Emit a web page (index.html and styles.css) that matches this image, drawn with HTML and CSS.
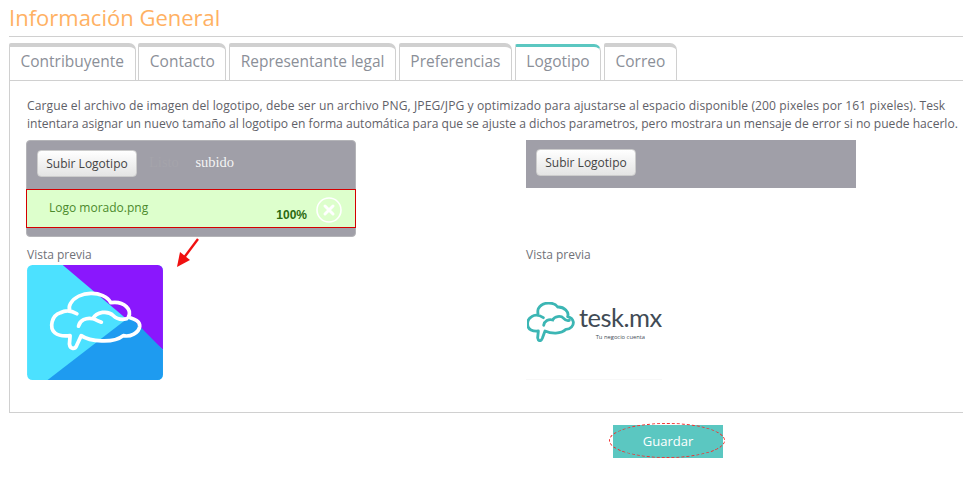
FILE: index.html
```html
<!DOCTYPE html>
<html lang="es">
<head>
    <meta charset="UTF-8">
    <meta name="viewport" content="width=device-width, initial-scale=1.0">
    <title>Información General</title>
    <link rel="stylesheet" href="styles.css">
</head>
<body>
    <div class="page">
        <h1>Información General</h1>

        <ul class="tabs">
            <li class="tab">Contribuyente</li>
            <li class="tab">Contacto</li>
            <li class="tab">Representante legal</li>
            <li class="tab">Preferencias</li>
            <li class="tab active">Logotipo</li>
            <li class="tab">Correo</li>
        </ul>

        <div class="panel">
            <p class="intro"><span class="intro-first">Cargue el archivo de imagen del logotipo, debe ser un archivo PNG, JPEG/JPG y optimizado para ajustarse al espacio disponible (200 pixeles por 161 pixeles). Tesk</span><br>intentara asignar un nuevo tamaño al logotipo en forma automática para que se ajuste a dichos parametros, pero mostrara un mensaje de error si no puede hacerlo.</p>

            <div class="columns">
                <div class="column">
                    <div class="uploader">
                        <div class="uploader-bar">
                            <button class="upload-btn" type="button">Subir Logotipo</button>
                            <span class="upload-status"><span class="status-ghost">Listo</span> subido</span>
                        </div>
                        <div class="upload-row">
                            <span class="file-name">Logo morado.png</span>
                            <span class="file-percent">100%</span>
                            <span class="file-remove">
                                <svg viewBox="0 0 26 26" width="26" height="26">
                                    <circle cx="13" cy="13" r="12" fill="none" stroke="#fff" stroke-width="1.6"/>
                                    <path d="M9 9l8 8M17 9l-8 8" fill="none" stroke="#fff" stroke-width="3" stroke-linecap="round"/>
                                </svg>
                            </span>
                        </div>
                    </div>
                    <div class="preview-label">Vista previa</div>
                    <svg class="preview" viewBox="39 30 404 342" width="136" height="115">
                        <rect x="39" y="30" width="404" height="342" rx="16" fill="#4ce1ff"/>
                        <path d="M145 30H427a16 16 0 0 1 16 16V282Z" fill="#8a17fd"/>
                        <path d="M100 372L345 183L443 282V356a16 16 0 0 1-16 16Z" fill="#1e9bf0"/>
                        <path d="M187 175C170 165 152 165 138 172C112 180 104 216 122 232C132 240 150 242 167 240L165 265C167 281 182 282 187 268L200 240C225 257 295 265 325 240C345 245 372 232 374 212C375 195 355 190 340 185C352 165 330 136 288 142C268 104 190 106 168 145C164 152 164 160 166 165" fill="none" stroke="#fff" stroke-width="11" stroke-linecap="round" stroke-linejoin="round"/>
                        <path d="M192 212C195 195 215 185 235 190C245 168 280 165 295 180C305 190 318 194 335 190M238 190C245 194 252 197 260 200" fill="none" stroke="#fff" stroke-width="11" stroke-linecap="round"/>
                    </svg>
                </div>

                <div class="column">
                    <div class="uploader-bar plain">
                        <button class="upload-btn" type="button">Subir Logotipo</button>
                    </div>
                    <div class="spacer"></div>
                    <div class="preview-label">Vista previa</div>
                    <div class="brand">
                        <svg class="brand-cloud" viewBox="38 48 144 120" width="48" height="40">
                            <path d="M87 95C72 85 62 85 52 92C36 100 36 125 50 132C56 135 64 136 72 135L70 155C72 167 80 167 84 157L92 135C110 143 140 145 155 130C170 130 178 118 177 108C175 98 168 94 160 92C165 78 150 62 130 63C120 48 85 45 72 68C70 74 70 78 71 82" fill="none" stroke="#3cb6b4" stroke-width="8.5" stroke-linecap="round" stroke-linejoin="round"/>
                            <path d="M88 118C90 105 103 98 115 102C120 90 140 88 148 97C153 103 158 105 165 103" fill="none" stroke="#3cb6b4" stroke-width="8.5" stroke-linecap="round"/>
                        </svg>
                        <div class="brand-text">
                            <div class="brand-name">tesk.mx</div>
                            <div class="brand-tag">Tu negocio cuenta</div>
                        </div>
                    </div>
                </div>
            </div>

            <svg class="arrow" viewBox="0 0 24 30" width="24" height="30">
                <path d="M22 1L7 21" stroke="#f01010" stroke-width="2.4" fill="none"/>
                <path d="M1 29L4 14L14 22Z" fill="#f01010"/>
            </svg>
        </div>

        <div class="actions">
            <button class="save-btn" type="button">Guardar</button>
        </div>
    </div>
</body>
</html>
```
FILE: styles.css
```css
:root {
    --teal: #5bc7c1;
    --line: #d0d0d0;
    --text: #6f7178;
    --box: #a09fa8;
}
html, body {
    margin: 0;
    padding: 0;
    height: 100%;
    overflow: hidden;
    background: #ffffff;
}
body {
    font-family: "Open Sans", sans-serif;
    font-size: 12px;
    color: var(--text);
}
.page {
    width: 954px;
    padding-left: 9px;
}
h1 {
    margin: 0;
    height: 36px;
    line-height: 35px;
    font-size: 22px;
    font-weight: 400;
    color: #ffb163;
    border-bottom: 1px solid var(--line);
}
.tabs {
    display: flex;
    gap: 2.8px;
    list-style: none;
    margin: 6px 0 0;
    padding: 0;
    height: 37px;
}
.tab {
    padding: 0 10.5px;
    line-height: 28px;
    font-size: 15.5px;
    color: #8b8f98;
    background: #ffffff;
    border: 1px solid var(--line);
    border-top: 4px solid var(--line);
    border-bottom: 0;
    border-top-right-radius: 7px;
    border-top-left-radius: 2px;
}
.tab.active {
    margin-top: 1px;
    border-top: 3px solid var(--teal);
}
.panel {
    position: relative;
    height: 333px;
    box-sizing: border-box;
    border: 1px solid var(--line);
    border-right: 0;
    padding: 16px 0 0 17px;
}
.intro {
    margin: 0;
    line-height: 18px;
    white-space: nowrap;
    font-size: 12.1px;
    color: #5f6168;
}
.intro-first {
    letter-spacing: 0.08px;
}
.columns {
    display: grid;
    grid-template-columns: 499px 1fr;
    margin-top: 7px;
}
.uploader {
    width: 330px;
    height: 97px;
    margin-left: -1px;
    box-sizing: border-box;
    background: var(--box);
    border: 1px solid #b4b4b8;
    border-radius: 4px;
}
.uploader-bar {
    display: flex;
    align-items: flex-start;
    height: 48px;
    padding: 9px 0 0 10px;
    box-sizing: border-box;
}
.uploader-bar.plain {
    width: 330px;
    background: var(--box);
}
.upload-btn {
    width: 100px;
    height: 27px;
    padding: 0;
    font-family: inherit;
    font-size: 12px;
    color: #444444;
    background: linear-gradient(#ffffff, #e4e4e4);
    border: 1px solid #cccccc;
    border-radius: 4px;
}
.upload-status {
    margin-left: 12px;
    font-family: "Liberation Serif", serif;
    font-size: 14.5px;
    line-height: 24px;
    color: #f4f4f4;
}
.status-ghost {
    color: #a5a4ab;
    margin-right: 13px;
}
.upload-row {
    display: flex;
    align-items: flex-start;
    height: 39px;
    margin: 0 -1px;
    box-sizing: border-box;
    background: #ddffcc;
    border: 1px solid #d40000;
    padding-left: 22px;
}
.file-name {
    line-height: 35px;
    color: #4c8a2c;
}
.file-percent {
    margin-left: auto;
    margin-top: 18px;
    font-family: "Liberation Sans", sans-serif;
    font-weight: bold;
    line-height: 14px;
    color: #2b6a10;
}
.file-remove {
    display: flex;
    margin: 7px 13px 0 9px;
}
.preview-label {
    margin-top: 9px;
    line-height: 17px;
}
.spacer {
    height: 49px;
}
.preview {
    display: block;
    margin-top: 2px;
}
.brand {
    display: flex;
    align-items: flex-start;
    width: 136px;
    height: 115px;
    margin-top: 2px;
    border-bottom: 1px solid #f8f8f8;
    box-sizing: border-box;
    padding: 36px 0 0 1px;
    gap: 4px;
}
.brand-cloud {
    flex: none;
    margin-top: 1px;
}
.brand-text {
    text-align: center;
}
.brand-name {
    font-family: "Lato", sans-serif;
    font-size: 25.5px;
    line-height: 32px;
    letter-spacing: -0.5px;
    color: #414b55;
}
.brand-tag {
    font-size: 5.8px;
    line-height: 8px;
    color: #414b55;
}
.arrow {
    position: absolute;
    left: 166px;
    top: 157px;
}
.actions {
    display: flex;
    padding: 12px 0 0 604px;
}
.save-btn {
    position: relative;
    width: 110px;
    height: 33px;
    padding: 0 0 2px;
    font-family: inherit;
    font-size: 13px;
    color: #ffffff;
    background: var(--teal);
    border: 0;
}
.save-btn::after {
    content: "";
    position: absolute;
    left: -4px;
    top: -2px;
    width: 114px;
    height: 33px;
    border: 1px dashed #f33030;
    border-radius: 50%;
}
```
